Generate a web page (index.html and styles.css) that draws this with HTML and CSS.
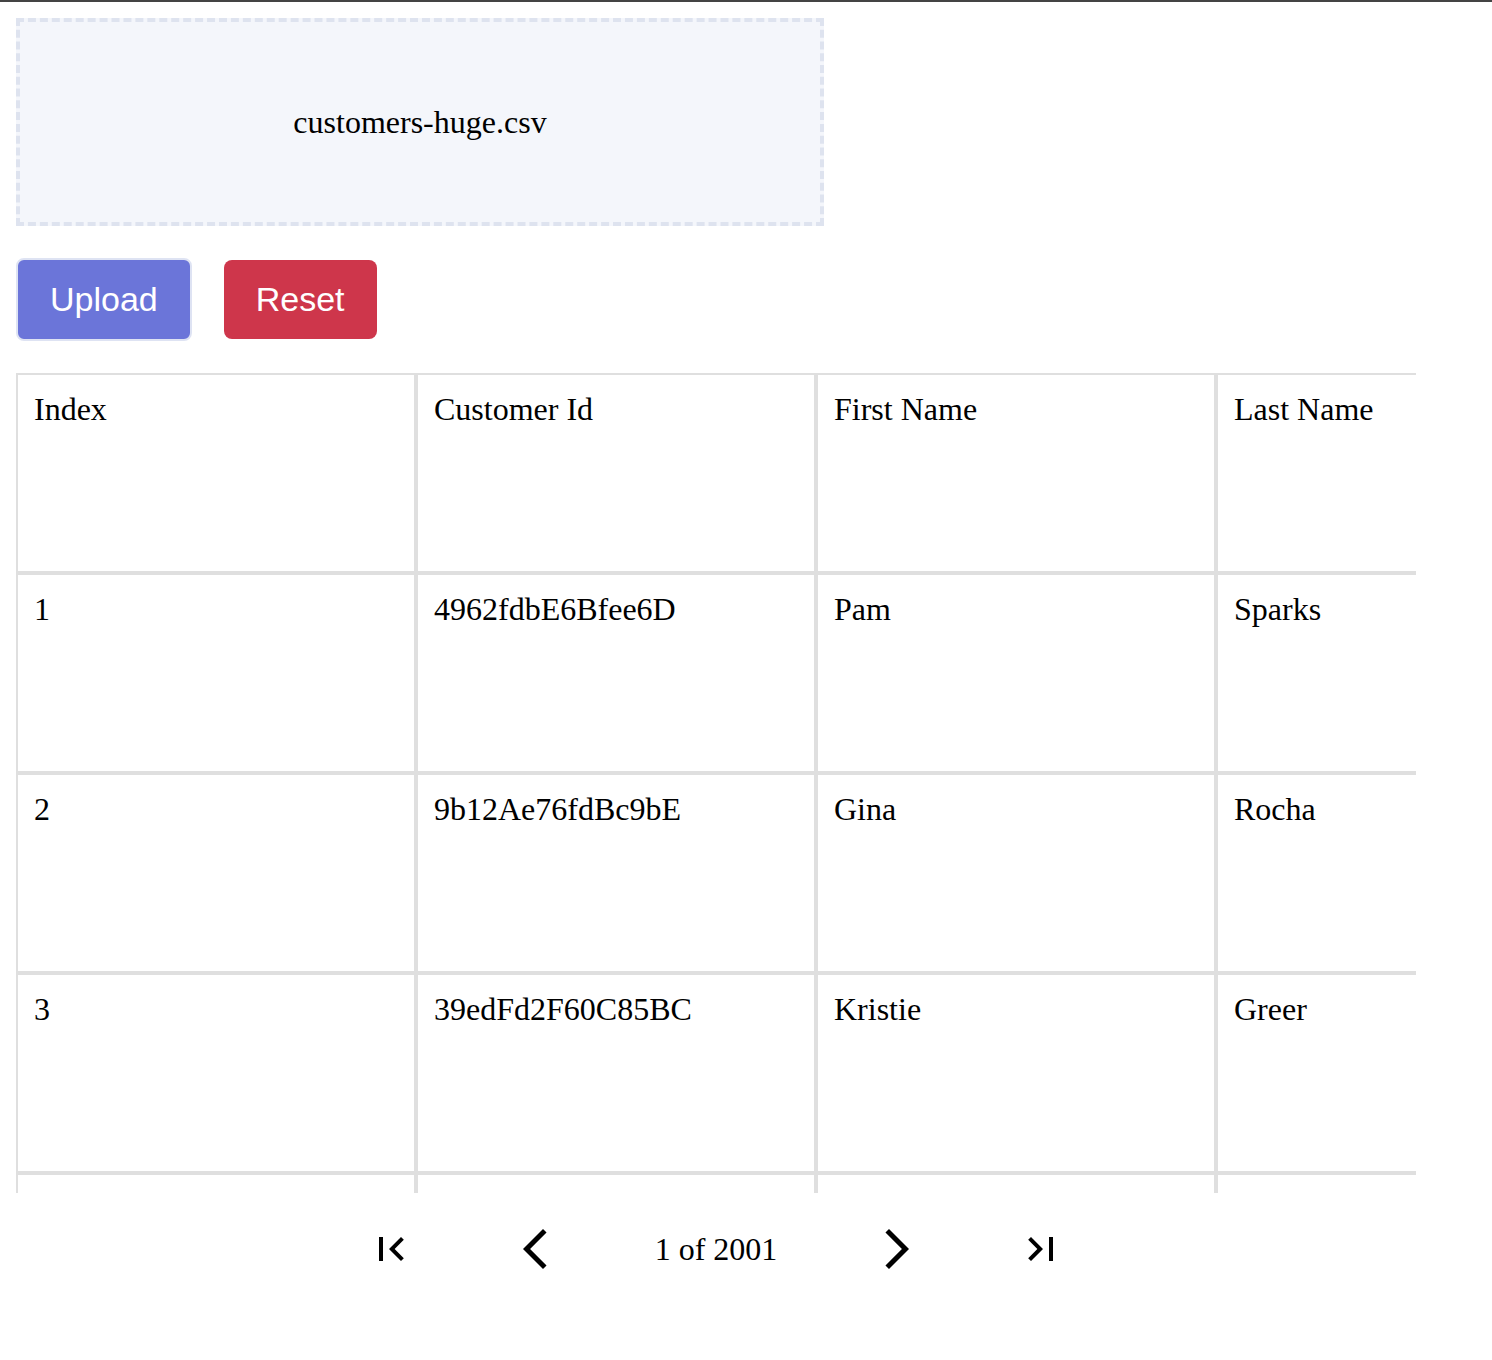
FILE: index.html
```html
<!DOCTYPE html>
<html lang="en">
<head>
<meta charset="utf-8">
<meta name="viewport" content="width=device-width, initial-scale=1">
<title>CSV viewer</title>
<link rel="stylesheet" href="styles.css">
</head>
<body>
<main class="page">
  <label class="dropzone">
    <input class="dropzone-input" type="file" accept=".csv">
    <span>customers-huge.csv</span>
  </label>

  <div class="actions">
    <button class="button button-upload" type="button">Upload</button>
    <button class="button button-reset" type="button">Reset</button>
  </div>

  <div class="grid-viewport">
    <table class="grid">
      <thead>
        <tr><th scope="col">Index</th><th scope="col">Customer Id</th><th scope="col">First Name</th><th scope="col">Last Name</th></tr>
      </thead>
      <tbody>
        <tr><td>1</td><td>4962fdbE6Bfee6D</td><td>Pam</td><td>Sparks</td></tr>
        <tr><td>2</td><td>9b12Ae76fdBc9bE</td><td>Gina</td><td>Rocha</td></tr>
        <tr><td>3</td><td>39edFd2F60C85BC</td><td>Kristie</td><td>Greer</td></tr>
        <tr><td></td><td></td><td></td><td></td></tr>
      </tbody>
    </table>
  </div>

  <nav class="pagination" aria-label="Pagination">
    <button class="page-button" type="button" aria-label="First page">
      <svg class="icon" viewBox="0 0 24 24" aria-hidden="true"><path d="M18.41 16.59 13.82 12l4.59-4.59L17 6l-6 6 6 6zM6 6h2v12H6z"/></svg>
    </button>
    <button class="page-button" type="button" aria-label="Previous page">
      <svg class="icon" viewBox="0 0 24 24" aria-hidden="true"><path d="M17.77 3.77 16 2 6 12l10 10 1.77-1.77L9.54 12z"/></svg>
    </button>
    <span>1 of 2001</span>
    <button class="page-button" type="button" aria-label="Next page">
      <svg class="icon" viewBox="0 0 24 24" aria-hidden="true"><path d="M6.23 20.23 8 22l10-10L8 2 6.23 3.77 14.46 12z"/></svg>
    </button>
    <button class="page-button" type="button" aria-label="Last page">
      <svg class="icon" viewBox="0 0 24 24" aria-hidden="true"><path d="M5.59 7.41 10.18 12l-4.59 4.59L7 18l6-6-6-6zM16 6h2v12h-2z"/></svg>
    </button>
  </nav>
</main>
</body>
</html>
```
FILE: styles.css
```css
* {
  box-sizing: border-box;
}

body {
  margin: 0;
  border-top: 2px solid #444;
  background: #fff;
  color: #000;
  font: 32px/36px "Liberation Serif", "Times New Roman", serif;
}

.page {
  display: flex;
  flex-direction: column;
  gap: 32px;
  padding: 16px;
}

.dropzone {
  display: flex;
  align-items: center;
  justify-content: center;
  width: 100%;
  max-width: 808px;
  min-height: 208px;
  border: 4px dashed #dee3ef;
  background: #f4f6fb;
  cursor: pointer;
}

.dropzone-input {
  position: absolute;
  width: 1px;
  height: 1px;
  opacity: 0;
}

.actions {
  display: flex;
  align-items: center;
  gap: 32px;
}

.button {
  padding: 20px 32px;
  border: 0;
  border-radius: 8px;
  color: #fff;
  font: 34px/39px "Liberation Sans", Arial, sans-serif;
  cursor: pointer;
}

.button-upload {
  border: 2px solid #dee3f3;
  background: #6b75d9;
}

.button-reset {
  background: #ce364b;
}

.grid-viewport {
  max-width: 1400px;
  height: 820px;
  overflow: hidden;
}

.grid {
  width: 1600px;
  border-spacing: 0;
  table-layout: fixed;
}

.grid th,
.grid td {
  height: 200px;
  padding: 16px;
  border: 2px solid #dfdfdf;
  font-weight: 400;
  text-align: left;
  vertical-align: top;
}

.pagination {
  display: flex;
  align-items: center;
  justify-content: center;
  gap: 96px;
  max-width: 1400px;
}

.page-button {
  padding: 0;
  border: 0;
  background: none;
  cursor: pointer;
}

.icon {
  display: block;
  width: 48px;
  height: 48px;
}
```
